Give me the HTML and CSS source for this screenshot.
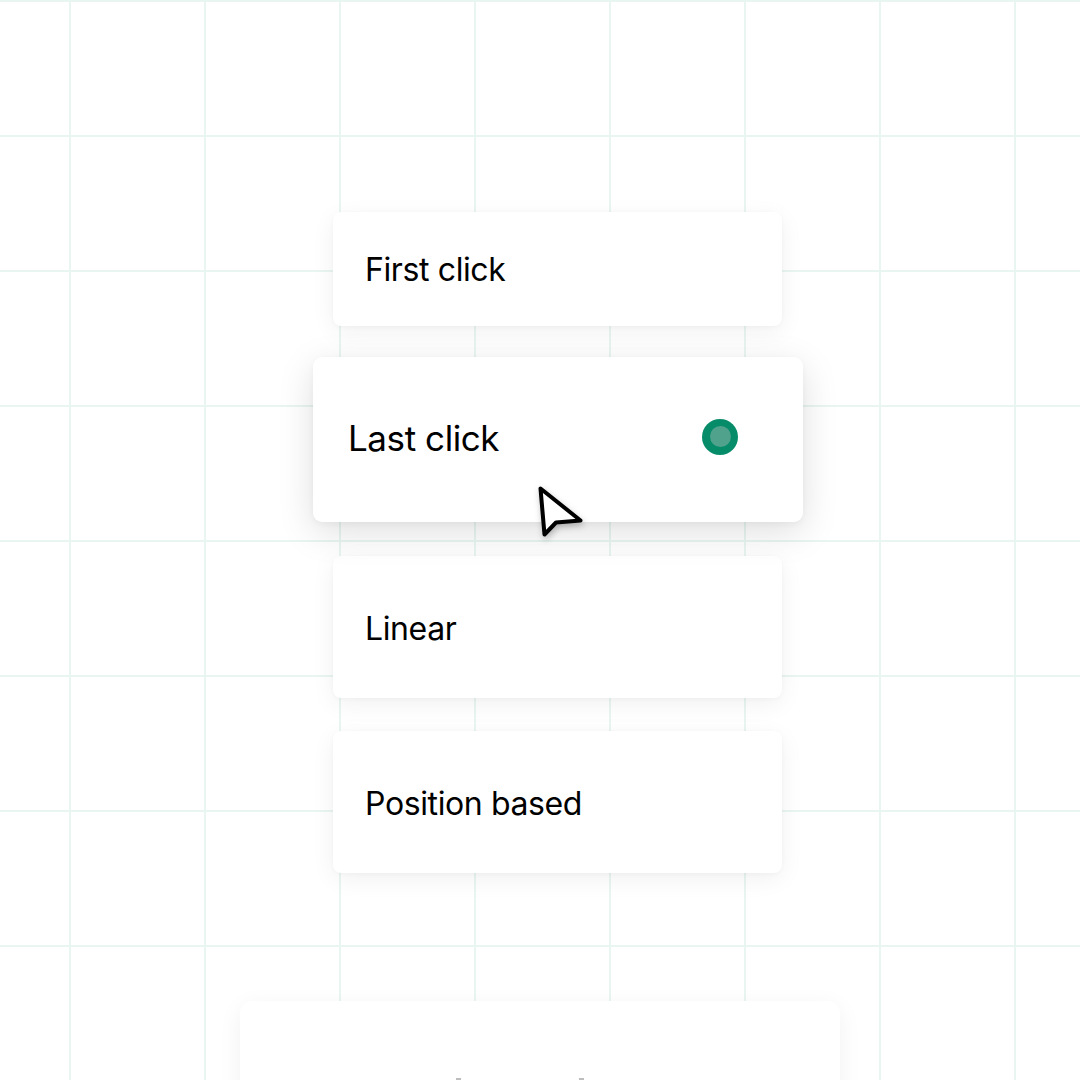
FILE: index.html
```html
<!DOCTYPE html>
<html lang="en">
<head>
<meta charset="utf-8">
<title>Attribution models</title>
<link rel="stylesheet" href="styles.css">
</head>
<body>
<div class="canvas">
  <div class="list">
    <div class="card card-first"><span class="label">First click</span></div>
    <div class="card card-active">
      <span class="label">Last click</span>
      <span class="radio"><span class="radio-dot"></span></span>
      <svg class="cursor" width="60" height="64" viewBox="0 0 60 64" aria-hidden="true">
        <path d="M7.5 6.5 L11.5 52.5 L23 40.5 L47.5 38.5 Z" fill="#fff" stroke="#000" stroke-width="4" stroke-linejoin="round"/>
      </svg>
    </div>
    <div class="card card-tall"><span class="label">Linear</span></div>
    <div class="card card-tall"><span class="label">Position based</span></div>
  </div>
  <div class="bottom-card">
    <div class="peek">
      <span class="peek-mark"></span>
      <span class="peek-mark"></span>
    </div>
  </div>
</div>
</body>
</html>
```
FILE: styles.css
```css
html, body {
  margin: 0;
  padding: 0;
}
body {
  width: 1080px;
  height: 1080px;
  overflow: hidden;
  background-color: #ffffff;
  background-image:
    linear-gradient(to right, #e8f5f1 0, #e8f5f1 2px, transparent 2px),
    linear-gradient(to bottom, #e8f5f1 0, #e8f5f1 2px, transparent 2px);
  background-size: 135px 135px, 135px 135px;
  background-position: 69px 0, 0 0;
  font-family: "Inter", "Noto Sans", sans-serif;
  color: #000000;
}
.canvas {
  display: flex;
  flex-direction: column;
  padding-top: 212px;
}
.list {
  display: flex;
  flex-direction: column;
  align-items: flex-start;
  padding-left: 333px;
}
.card {
  box-sizing: border-box;
  width: 449px;
  background: #ffffff;
  border-radius: 8px;
  display: flex;
  align-items: center;
  padding-left: 32px;
  box-shadow: 0 6px 24px rgba(0, 0, 0, 0.06), 0 1px 4px rgba(0, 0, 0, 0.03);
}
.label {
  font-size: 32px;
  font-weight: 400;
  letter-spacing: -0.012em;
  line-height: 1;
}
.card-first {
  height: 114px;
  padding-top: 2px;
}
.card-active {
  position: relative;
  margin-top: 31px;
  margin-left: -20px;
  width: 490px;
  height: 165px;
  border-radius: 9px;
  padding-left: 35px;
  padding-right: 65px;
  padding-bottom: 2px;
  justify-content: space-between;
  box-shadow: 0 10px 36px rgba(0, 0, 0, 0.13), 0 2px 6px rgba(0, 0, 0, 0.04);
}
.card-active .label {
  font-size: 35px;
}
.radio {
  width: 36px;
  height: 36px;
  border-radius: 50%;
  background: #078c6a;
  display: flex;
  align-items: center;
  justify-content: center;
  margin-top: -4px;
}
.radio-dot {
  width: 21px;
  height: 21px;
  border-radius: 50%;
  background: #50a28c;
}
.cursor {
  position: absolute;
  left: 220px;
  top: 125px;
  filter: drop-shadow(1px 3px 3px rgba(0, 0, 0, 0.25));
}
.card-tall {
  height: 142px;
  margin-top: 34px;
  padding-top: 4px;
}
.card-tall + .card-tall {
  margin-top: 33px;
}
.bottom-card {
  box-sizing: border-box;
  width: 600px;
  height: 200px;
  margin-top: 128px;
  margin-left: 240px;
  background: #ffffff;
  border-radius: 12px;
  box-shadow: 0 6px 24px rgba(0, 0, 0, 0.06);
  padding-top: 77px;
  padding-left: 216px;
}
.peek {
  display: flex;
  gap: 118px;
}
.peek-mark {
  width: 5px;
  height: 2px;
  background: #bdbdbd;
}
```
